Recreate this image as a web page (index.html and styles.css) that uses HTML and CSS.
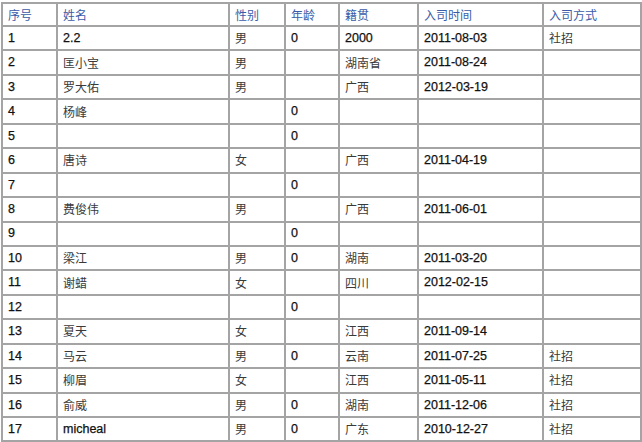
FILE: index.html
```html
<!DOCTYPE html>
<html lang="zh">
<head>
<meta charset="utf-8">
<link rel="stylesheet" href="styles.css">
</head>
<body>
<div class="sheet">
  <div class="c h">序号</div><div class="c h">姓名</div><div class="c h">性别</div><div class="c h">年龄</div><div class="c h">籍贯</div><div class="c h">入司时间</div><div class="c h">入司方式</div>
  <div class="c n">1</div><div class="c n">2.2</div><div class="c z">男</div><div class="c n">0</div><div class="c n">2000</div><div class="c n">2011-08-03</div><div class="c z">社招</div>
  <div class="c n">2</div><div class="c z">匡小宝</div><div class="c z">男</div><div class="c"></div><div class="c z">湖南省</div><div class="c n">2011-08-24</div><div class="c"></div>
  <div class="c n">3</div><div class="c z">罗大佑</div><div class="c z">男</div><div class="c"></div><div class="c z">广西</div><div class="c n">2012-03-19</div><div class="c"></div>
  <div class="c n">4</div><div class="c z">杨峰</div><div class="c"></div><div class="c n">0</div><div class="c"></div><div class="c"></div><div class="c"></div>
  <div class="c n">5</div><div class="c"></div><div class="c"></div><div class="c n">0</div><div class="c"></div><div class="c"></div><div class="c"></div>
  <div class="c n">6</div><div class="c z">唐诗</div><div class="c z">女</div><div class="c"></div><div class="c z">广西</div><div class="c n">2011-04-19</div><div class="c"></div>
  <div class="c n">7</div><div class="c"></div><div class="c"></div><div class="c n">0</div><div class="c"></div><div class="c"></div><div class="c"></div>
  <div class="c n">8</div><div class="c z">费俊伟</div><div class="c z">男</div><div class="c"></div><div class="c z">广西</div><div class="c n">2011-06-01</div><div class="c"></div>
  <div class="c n">9</div><div class="c"></div><div class="c"></div><div class="c n">0</div><div class="c"></div><div class="c"></div><div class="c"></div>
  <div class="c n">10</div><div class="c z">梁江</div><div class="c z">男</div><div class="c n">0</div><div class="c z">湖南</div><div class="c n">2011-03-20</div><div class="c"></div>
  <div class="c n">11</div><div class="c z">谢蜡</div><div class="c z">女</div><div class="c"></div><div class="c z">四川</div><div class="c n">2012-02-15</div><div class="c"></div>
  <div class="c n">12</div><div class="c"></div><div class="c"></div><div class="c n">0</div><div class="c"></div><div class="c"></div><div class="c"></div>
  <div class="c n">13</div><div class="c z">夏天</div><div class="c z">女</div><div class="c"></div><div class="c z">江西</div><div class="c n">2011-09-14</div><div class="c"></div>
  <div class="c n">14</div><div class="c z">马云</div><div class="c z">男</div><div class="c n">0</div><div class="c z">云南</div><div class="c n">2011-07-25</div><div class="c z">社招</div>
  <div class="c n">15</div><div class="c z">柳眉</div><div class="c z">女</div><div class="c"></div><div class="c z">江西</div><div class="c n">2011-05-11</div><div class="c z">社招</div>
  <div class="c n">16</div><div class="c z">俞威</div><div class="c z">男</div><div class="c n">0</div><div class="c z">湖南</div><div class="c n">2011-12-06</div><div class="c z">社招</div>
  <div class="c n">17</div><div class="c n">micheal</div><div class="c z">男</div><div class="c n">0</div><div class="c z">广东</div><div class="c n">2010-12-27</div><div class="c z">社招</div>
</div>
</body>
</html>
```
FILE: styles.css
```css
html, body {
  margin: 0;
  padding: 0;
  background: #ffffff;
}
body {
  padding: 2px 0 0 1px;
}
.sheet {
  display: grid;
  grid-template-columns: 55px 172px 56px 54px 79px 125px 98px;
  grid-template-rows: 23px repeat(17, 24.45px);
  width: 641px;
  box-sizing: border-box;
  border-left: 2px solid #a4a4a4;
  border-top: 2px solid #a4a4a4;
}
.c {
  box-sizing: border-box;
  border-right: 2px solid #a4a4a4;
  border-bottom: 2px solid #a4a4a4;
  padding: 0 0 0 5px;
  display: flex;
  align-items: center;
  white-space: nowrap;
  overflow: hidden;
  line-height: 1;
}
.h {
  font-family: "Noto Sans CJK SC", sans-serif;
  font-size: 12px;
  color: #3a5ca8;
}
.n {
  font-family: "Liberation Sans", Arial, sans-serif;
  font-size: 12.5px;
  color: #111111;
  -webkit-text-stroke: 0.25px #111111;
}
.z {
  font-family: "Noto Sans CJK SC", sans-serif;
  font-size: 12px;
  color: #3a3a3a;
}
```
